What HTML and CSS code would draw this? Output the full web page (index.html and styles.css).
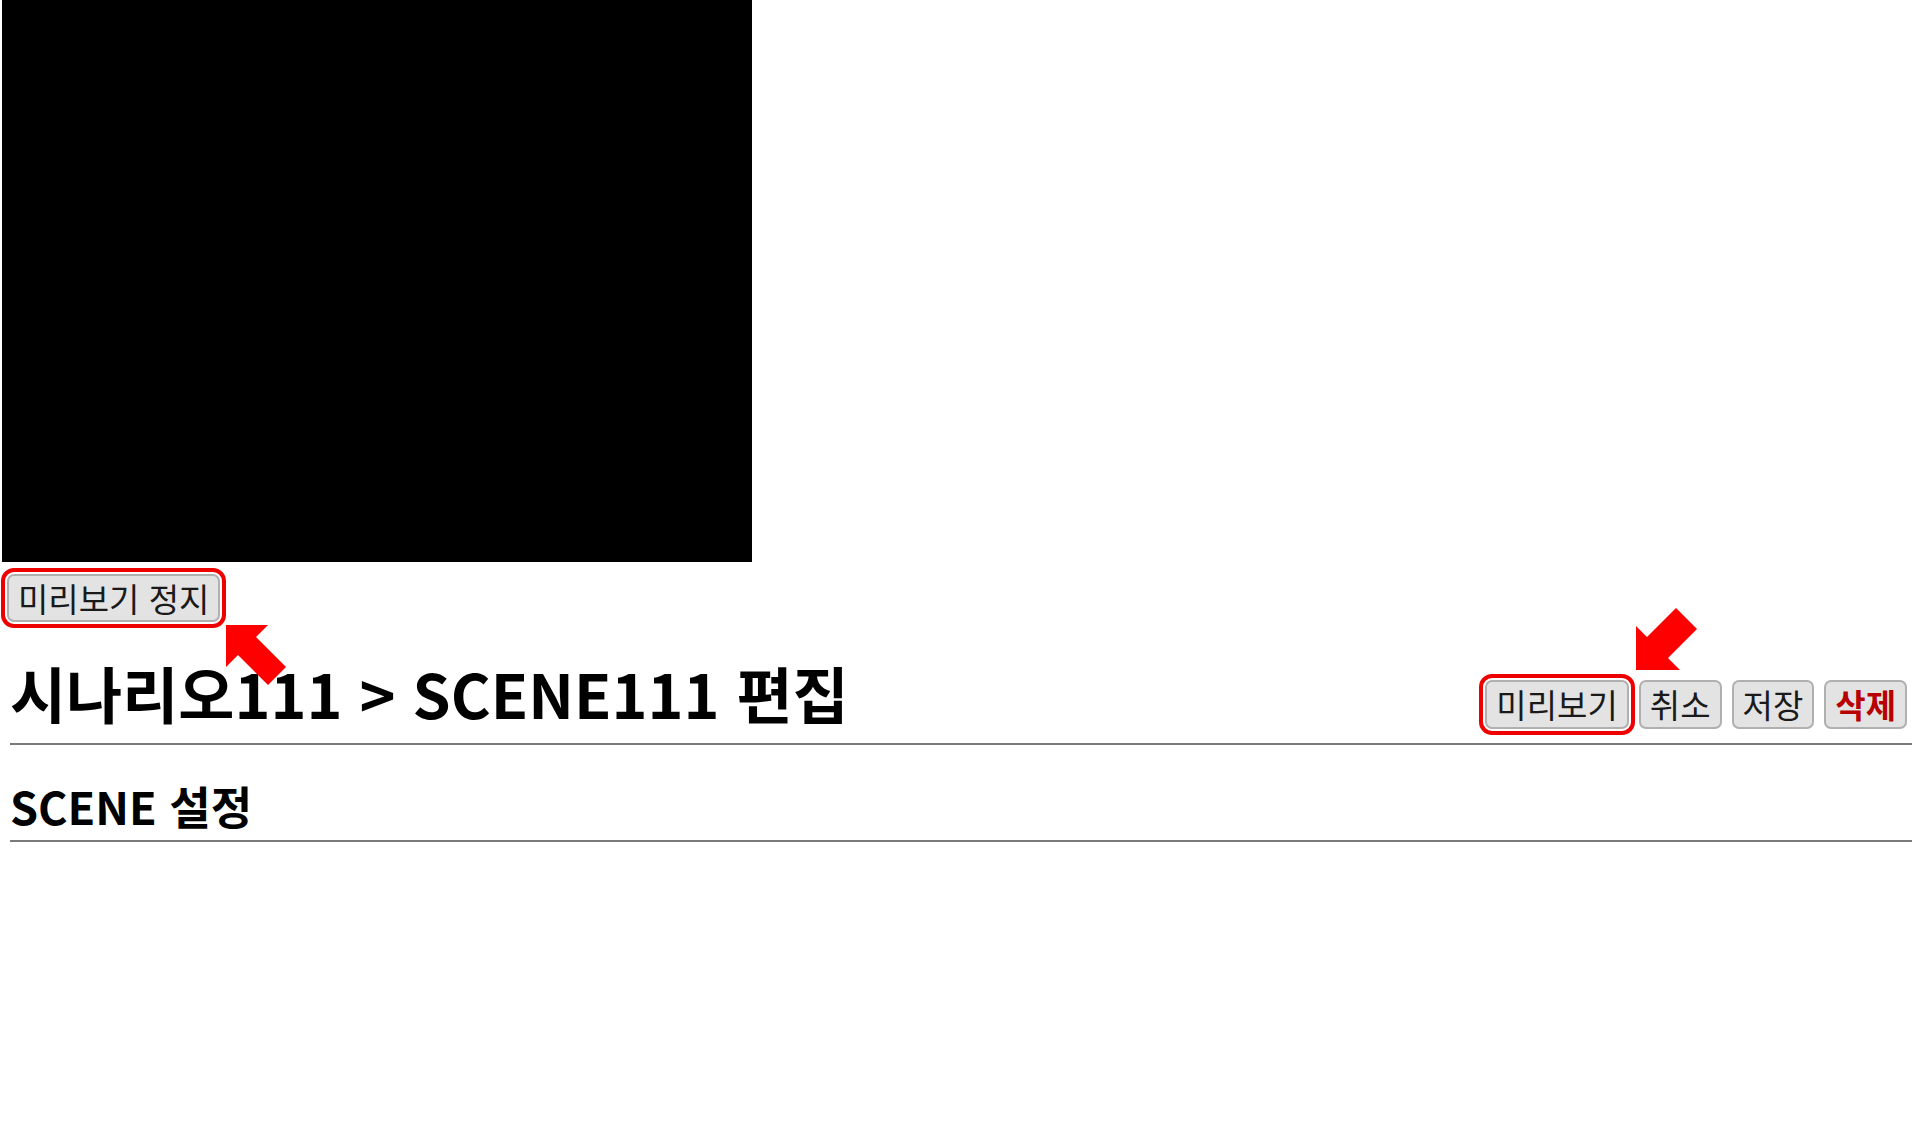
FILE: index.html
```html
<!DOCTYPE html>
<html lang="ko">
<head>
<meta charset="utf-8">
<title>SCENE111 편집</title>
<link rel="stylesheet" href="styles.css">
</head>
<body>
<div class="preview">
  <div class="video"></div>
  <div class="preview-actions">
    <button class="btn marked">미리보기 정지</button>
  </div>
</div>
<main class="page">
  <header class="page-head">
    <h1 class="title">시나리오111 &gt; SCENE111 편집</h1>
    <div class="actions">
      <button class="btn marked">미리보기</button>
      <button class="btn">취소</button>
      <button class="btn">저장</button>
      <button class="btn danger">삭제</button>
    </div>
  </header>
  <section class="section">
    <h2 class="section-title">SCENE 설정</h2>
  </section>
</main>

<svg class="arrow arrow-upleft" width="62" height="60" viewBox="0 0 62 60" aria-hidden="true">
  <polygon points="0,0 42,0 30,12 60,42 42,60 12,30 0,42" fill="#ff0000"/>
</svg>
<svg class="arrow arrow-downleft" width="62" height="62" viewBox="0 0 62 62" aria-hidden="true">
  <polygon points="0,62 44,62 32,50 61,21 40,0 11,29 0,18" fill="#ff0000"/>
</svg>
</body>
</html>
```

FILE: styles.css
```css
html, body {
  margin: 0;
  padding: 0;
  background: #ffffff;
}

body {
  font-family: "Noto Sans CJK KR", "Noto Sans", sans-serif;
  color: #000;
  position: relative;
  min-height: 1125px;
}

.preview {
  padding-left: 2px;
}

.video {
  width: 750px;
  height: 562px;
  background: #000;
}

.preview-actions {
  padding: 12px 0 0 5px;
}

.btn {
  font-family: "Noto Sans CJK KR", "Noto Sans", sans-serif;
  font-size: 33px;
  line-height: 1;
  height: 48px;
  padding: 0 9px;
  background: #e3e3e3;
  color: #1a1a1a;
  border: 2px solid #b0b0b0;
  border-radius: 7px;
  box-sizing: border-box;
  cursor: pointer;
}

.actions .btn {
  height: 49px;
}

.btn.marked {
  outline: 4px solid #ee0000;
  outline-offset: 2px;
}

.btn.danger {
  color: #b80000;
  font-weight: 700;
}

.page {
  margin: 0 10px;
}

.page-head {
  display: flex;
  justify-content: space-between;
  align-items: flex-end;
  border-bottom: 2px solid #7a7a7a;
  padding-bottom: 14px;
  margin-top: 35px;
}

.title {
  margin: 0;
  font-size: 61px;
  line-height: 72px;
  font-weight: 700;
  letter-spacing: 0;
}

.actions {
  display: flex;
  gap: 10px;
  margin-right: 5px;
}

.section-title {
  margin: 34px 0 0;
  font-size: 45px;
  line-height: 54px;
  font-weight: 700;
  border-bottom: 2px solid #7a7a7a;
  padding-bottom: 7px;
}

.arrow {
  position: absolute;
  display: block;
}

.arrow-upleft {
  left: 226px;
  top: 625px;
}

.arrow-downleft {
  left: 1636px;
  top: 608px;
}
```
